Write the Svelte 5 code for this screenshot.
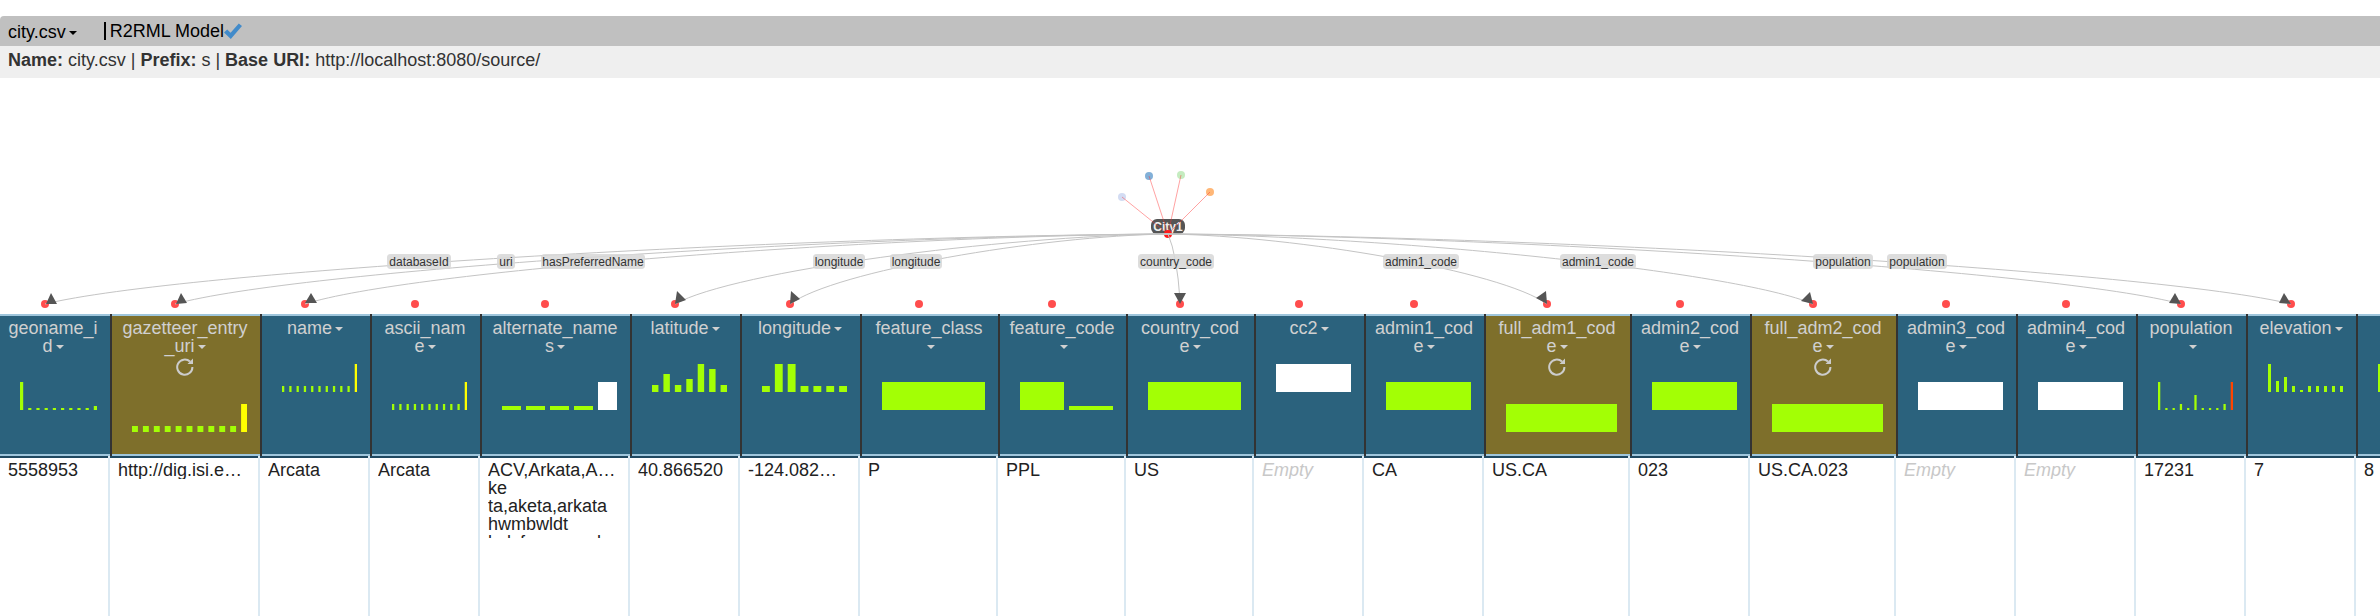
<script>
  const LIME = '#a3ff05';
  const only = (color) => [[28, color]];
  const lime = (...heights) => heights.map((h) => [h, LIME]);

  const columns = [
    { width: 110, lines: ['geoname_i', 'd'], value: '5558953', bars: lime(28, 2, 2, 2, 2, 2, 2, 2, 2, 4), dot: 45 },
    { width: 150, lines: ['gazetteer_entry', '_uri'], derived: true, value: 'http://dig.isi.e…', bars: [...lime(6, 6, 6, 6, 6, 6, 6, 6, 6, 6), [28, '#ffff00']], dot: 175 },
    { width: 110, lines: ['name'], value: 'Arcata', bars: [...lime(6, 6, 6, 6, 6, 6, 6, 6, 6, 6), [28, '#ffff00']], dot: 305 },
    { width: 110, lines: ['ascii_nam', 'e'], value: 'Arcata', bars: [...lime(6, 6, 6, 6, 6, 6, 6, 6, 6, 6), [28, '#ffff00']], dot: 415 },
    { width: 150, lines: ['alternate_name', 's'], value: 'ACV,Arkata,A… ke ta,aketa,arkata hwmbwldt kalyfwrnya,cal', bars: [...lime(4, 4, 4, 4), [28, '#ffffff']], dot: 545 },
    { width: 110, lines: ['latitude'], value: '40.866520', bars: lime(7, 18, 7, 13, 28, 23, 7), dot: 675 },
    { width: 120, lines: ['longitude'], value: '-124.082…', bars: lime(6, 28, 28, 6, 6, 6, 6), dot: 790 },
    { width: 138, lines: ['feature_class', ''], value: 'P', bars: only(LIME), dot: 919 },
    { width: 128, lines: ['feature_code', ''], value: 'PPL', bars: lime(28, 4), dot: 1052 },
    { width: 128, lines: ['country_cod', 'e'], value: 'US', bars: only(LIME), dot: 1180 },
    { width: 110, lines: ['cc2'], value: '', bars: only('#ffffff'), dot: 1299 },
    { width: 120, lines: ['admin1_cod', 'e'], value: 'CA', bars: only(LIME), dot: 1414 },
    { width: 146, lines: ['full_adm1_cod', 'e'], derived: true, value: 'US.CA', bars: only(LIME), dot: 1547 },
    { width: 120, lines: ['admin2_cod', 'e'], value: '023', bars: only(LIME), dot: 1680 },
    { width: 146, lines: ['full_adm2_cod', 'e'], derived: true, value: 'US.CA.023', bars: only(LIME), dot: 1813 },
    { width: 120, lines: ['admin3_cod', 'e'], value: '', bars: only('#ffffff'), dot: 1946 },
    { width: 120, lines: ['admin4_cod', 'e'], value: '', bars: only('#ffffff'), dot: 2066 },
    { width: 110, lines: ['population', ''], value: '17231', bars: [...lime(28, 2, 2, 6, 2, 15, 2, 2, 2, 6), [28, '#ff4500']], dot: 2181 },
    { width: 110, lines: ['elevation'], value: '7', bars: lime(28, 11, 15, 6, 2, 6, 6, 6, 6, 6), dot: 2291 },
    { width: 110, lines: [''], value: '8', bars: lime(28, 6, 6, 6, 6, 6, 6), dot: 2401 }
  ];
  const tableWidth = columns.reduce((sum, c) => sum + c.width, 0);

  const edges = [
    { to: 45, label: 'databaseId', at: 419, w: 64, head: '51,293 46,304 57,304' },
    { to: 175, label: 'uri', at: 506, w: 18, head: '181,293 176,304 187,303' },
    { to: 305, label: 'hasPreferredName', at: 593, w: 104, head: '311,293 305,303 317,303' },
    { to: 675, label: 'longitude', at: 839, w: 52, head: '677,291 686,300 675,304' },
    { to: 790, label: 'longitude', at: 916, w: 52, head: '791,291 800,299 790,304' },
    { to: 1180, label: 'country_code', at: 1176, w: 76, head: '1174,293 1186,293 1180,304' },
    { to: 1547, label: 'admin1_code', at: 1421, w: 76, head: '1536,298 1546,291 1547,304' },
    { to: 1813, label: 'admin1_code', at: 1598, w: 76, head: '1801,301 1810,292 1813,304' },
    { to: 2181, label: 'population', at: 1843, w: 60, head: '2175,293 2169,303 2181,304' },
    { to: 2291, label: 'population', at: 1917, w: 60, head: '2284,293 2279,303 2291,304' }
  ];
  const suggestions = [
    { x: 1122, y: 197, color: '#d3dcf3' },
    { x: 1149, y: 176, color: '#82b0d8' },
    { x: 1181, y: 175, color: '#c5ecc0' },
    { x: 1210, y: 192, color: '#ffb777' }
  ];

  const hub = { x: 1168, y: 234 };
  function curve(x) {
    const dx = x - hub.x;
    if (Math.abs(dx) < 50) return `M${hub.x} ${hub.y}Q${x - 3} 255 ${x} 300`;
    return `M${hub.x} ${hub.y}C${hub.x + dx * 0.34} 236 ${x - dx * 0.12} 271 ${x} 304`;
  }

  function layout(column, index) {
    const width = column.width - (index ? 35 : 33);
    const count = column.bars.length;
    const bar = (width - 5 * (count - 1)) / count;
    return { width, rects: column.bars.map(([h, color], i) => ({ x: i * (bar + 5), y: 28 - h, w: bar, h, color })) };
  }
</script>

<main>
  <header class="title">
    <button class="source">city.csv<span class="caret"></span></button>
    <span class="model">
      R2RML Model<svg width="18" height="16" viewBox="0 0 18 16" aria-hidden="true"><path d="M0 9.5 3.2 6.5 6.6 9.8 14.8 0.4 18 3 6.8 16Z" fill="#428bca" /></svg>
    </span>
  </header>
  <p class="info"><b>Name:</b> city.csv | <b>Prefix:</b> s | <b>Base URI:</b> http://localhost:8080/source/</p>

  <div class="sheet">
    <svg class="graph" width={tableWidth} height="236" viewBox="0 78 {tableWidth} 236">
      {#each columns as c}
        <circle cx={c.dot} cy="304" r="4" fill="#ff4d4d" />
      {/each}
      <rect x="1151" y="219" width="34" height="15" rx="6" fill="#555" />
      <text class="hub" x={hub.x} y="231">City1</text>
      {#each suggestions as s}
        <circle cx={s.x} cy={s.y} r="4" fill={s.color} />
        <line x1={s.x} y1={s.y} x2={hub.x} y2={hub.y} stroke="#ff3030" stroke-opacity="0.45" />
      {/each}
      <circle cx={hub.x} cy={hub.y} r="4" fill="#ff1a1a" />
      {#each edges as e}
        <rect x={e.at - e.w / 2} y="254" width={e.w} height="15" rx="4" fill="#ddd" />
      {/each}
      {#each edges as e}
        <path d={curve(e.to)} fill="none" stroke="#c4c4c4" />
        <polygon points={e.head} fill="#555" />
      {/each}
      {#each edges as e}
        <rect x={e.at - e.w / 2} y="254" width={e.w} height="15" rx="4" fill="#ddd" fill-opacity="0.7" />
        <text class="edge" x={e.at} y="266">{e.label}</text>
      {/each}
    </svg>

    <table style="width: {tableWidth}px">
      <colgroup>
        {#each columns as c}<col style="width: {c.width}px" />{/each}
      </colgroup>
      <thead>
        <tr>
          {#each columns as c, i}
            {@const chart = layout(c, i)}
            <th class:derived={c.derived} scope="col">
              <button class="name">
                {#each c.lines as line, n}{#if n}<br />{/if}{line}{/each}<span class="caret"></span>
              </button>
              {#if c.derived}
                <button class="refresh" aria-label="Refresh">
                  <svg width="18" height="18" viewBox="0 0 18 18" aria-hidden="true">
                    <path d="M16.4 9A7.6 7.6 0 1 1 14 3.6" fill="none" stroke="#ccc" stroke-width="2" />
                    <path d="M17 0.5V6H11.5Z" fill="#ccc" />
                  </svg>
                </button>
              {/if}
              <svg class="chart" width={chart.width} height="28">
                {#each chart.rects as r}
                  <rect x={r.x} y={r.y} width={r.w} height={r.h} fill={r.color} />
                {/each}
              </svg>
            </th>
          {/each}
        </tr>
      </thead>
      <tbody>
        <tr>
          {#each columns as c}
            <td>
              <div class="value" class:empty={!c.value}>{c.value || 'Empty'}</div>
            </td>
          {/each}
        </tr>
      </tbody>
    </table>
  </div>
</main>

<style>
  :global(body) { background: #fff; }
  main {
    padding-top: 16px;
    font: 18px/18px "Liberation Sans", Arial, Helvetica, sans-serif;
    color: #222;
    overflow: hidden;
  }
  button {
    padding: 0;
    border: 0;
    background: none;
    font: inherit;
    color: inherit;
    cursor: pointer;
  }
  .caret {
    display: inline-block;
    margin-left: 3px;
    vertical-align: middle;
    border: 4px solid transparent;
    border-top-color: currentColor;
    border-bottom: 0;
  }
  .title {
    display: flex;
    align-items: center;
    gap: 27px;
    height: 30px;
    padding: 0 8px;
    border-top-left-radius: 4px;
    background: #c0c0c0;
    color: #000;
  }
  .source { padding-top: 2px; }
  .model {
    display: flex;
    align-items: center;
    padding-left: 4px;
    border-left: 2px solid #000;
  }
  .info {
    margin: 0;
    padding: 5px 8px 9px;
    background: #efefef;
    color: #333;
  }
  .sheet { overflow: hidden; }
  .graph { display: block; }
  .graph text { text-anchor: middle; font-size: 12px; }
  .edge { fill: #333; }
  .hub { fill: #eee; font-weight: bold; }
  table {
    table-layout: fixed;
    border-collapse: separate;
    border-spacing: 0;
  }
  th {
    height: 142px;
    box-sizing: border-box;
    padding: 5px 2px 0 0;
    border-left: 2px solid #333;
    background: #2b627d;
    box-shadow: inset 0 2px #9fc6dc, inset 0 -2px #9fc6dc;
    color: #d0d0d0;
    font-weight: normal;
    vertical-align: top;
    text-align: center;
  }
  th:first-child { border-left: 0; padding-right: 4px; }
  th.derived { background: #7e6f2b; }
  .name { display: block; width: 100%; }
  .refresh {
    display: block;
    height: 22px;
    margin: 0 auto;
    padding-top: 1px;
  }
  .refresh svg { display: block; }
  .chart { display: block; margin: 27px 0 0 20px; }
  td {
    height: 160px;
    box-sizing: border-box;
    padding: 5px 8px 0;
    border-right: 2px solid #dbe9f2;
    background: linear-gradient(#1f4860, #1f4860) top / 100% 2px no-repeat;
    background-clip: padding-box;
    vertical-align: top;
  }
  .value {
    max-height: 77px;
    overflow: hidden;
  }
  .empty { color: #c8c8c8; font-style: italic; }
</style>
